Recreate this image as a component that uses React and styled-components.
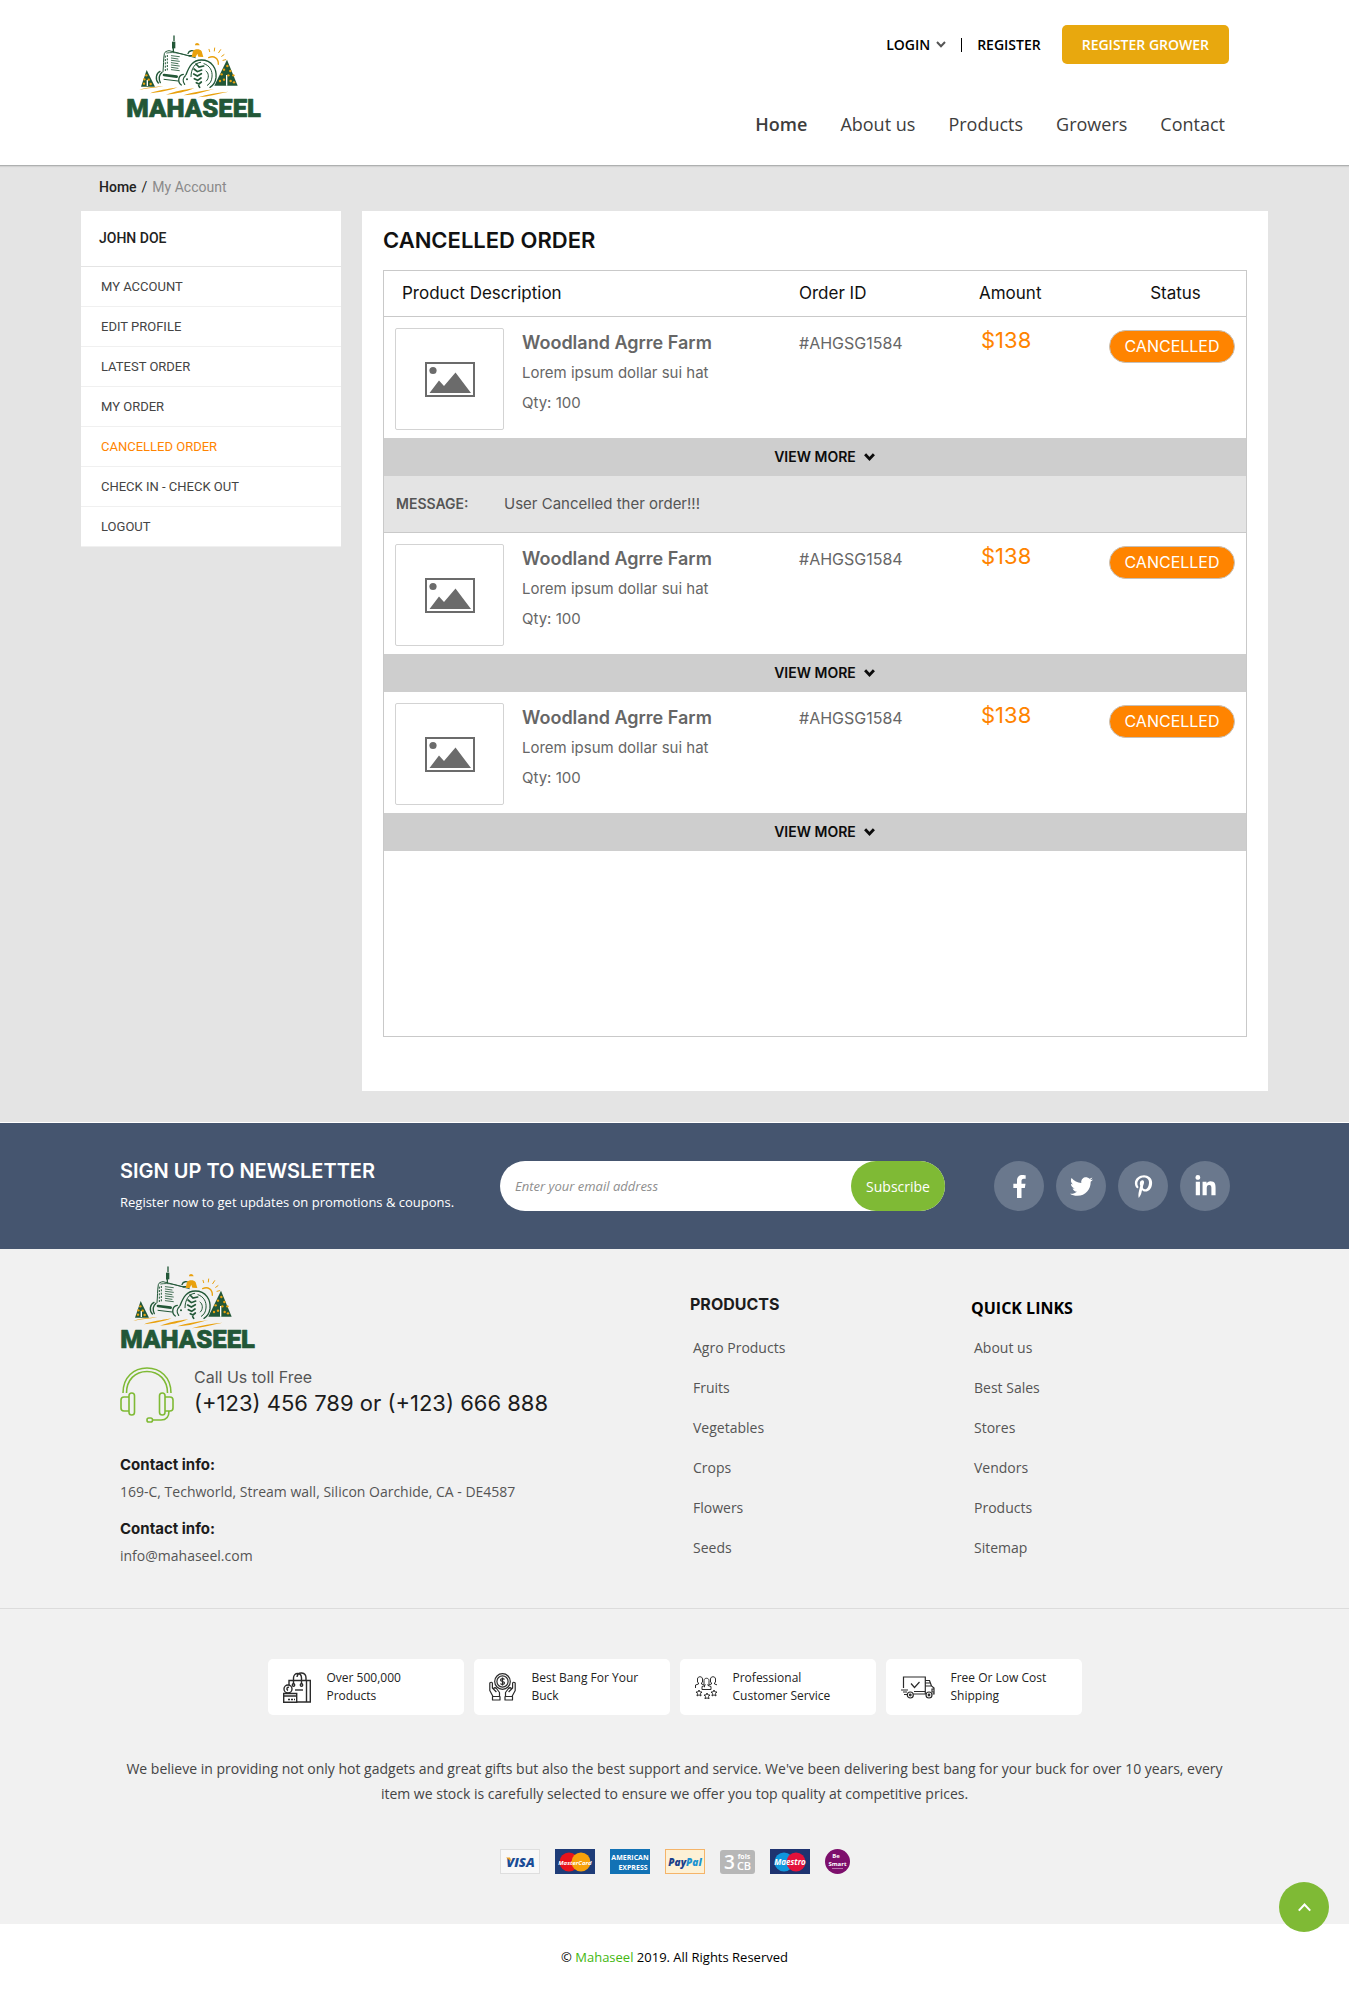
import React from 'react';
import styled, { createGlobalStyle, css } from 'styled-components';
import { FaFacebookF, FaTwitter, FaPinterestP, FaLinkedinIn } from 'react-icons/fa';

const inter = "'Inter', 'Liberation Sans', sans-serif";
const open = "'Open Sans', 'Liberation Sans', sans-serif";
const roboto = "'Roboto', 'Liberation Sans', sans-serif";
const line = '#c9c9c9';
const green = '#7fba35';
const orange = '#ff8400';

const GlobalStyle = createGlobalStyle`
  *, *::before, *::after { box-sizing: border-box; }
  body { margin: 0; background: #fff; font-family: ${open}; color: #111; }
  h1, h2, h3, p, ul { margin: 0; padding: 0; }
  ul { list-style: none; }
  a { color: inherit; text-decoration: none; }
  button { border: 0; padding: 0; background: none; color: inherit; font: inherit; cursor: pointer; }
  svg { display: block; flex: none; }
`;

/* Header */
const Header = styled.header`
  display: flex;
  justify-content: space-between;
  align-items: flex-start;
  padding: 25px 120px 26px 126px;
  background: #fff;
  border-bottom: 1px solid #aeb0b0;
  box-shadow: 0 1px 1px #d2d2d2;
  position: relative;
`;
const HeaderLogo = styled.a`
  margin-top: 10px;
`;
const HeaderSide = styled.div`
  display: flex;
  flex-direction: column;
  align-items: flex-end;
  gap: 45px;
`;
const AccountBar = styled.div`
  display: flex;
  align-items: center;
  gap: 15px;
  font-size: 14px;
  font-weight: 600;
  color: #000;
`;
const LoginButton = styled.button`
  display: flex;
  align-items: center;
  gap: 6px;
`;
const Divider = styled.span`
  width: 1px;
  height: 14px;
  background: #000;
`;
const GrowerButton = styled.button`
  height: 39px;
  margin-left: 6px;
  padding: 0 20px;
  border-radius: 5px;
  background: #e8a80e;
  color: #fff;
`;
const Nav = styled.nav`
  display: flex;
  gap: 33px;
  padding-right: 4px;
`;
const NavLink = styled.a`
  font-size: 18px;
  line-height: 30px;
  color: #3d3d3d;
  font-weight: ${(p) => (p.$active ? 600 : 400)};
`;

/* Account area */
const Page = styled.main`
  padding: 0 81px 31px;
  background: #e4e4e4;
`;
const Breadcrumb = styled.nav`
  display: flex;
  gap: 5px;
  padding: 10px 18px 13px;
  font: 400 14px/22px ${roboto};
  color: #222;
`;
const Crumb = styled.a`
  font-weight: ${(p) => (p.$current ? 400 : 500)};
  color: ${(p) => (p.$current ? '#8a8a8a' : '#222')};
`;
const Columns = styled.div`
  display: flex;
  align-items: flex-start;
  gap: 21px;
`;
const Sidebar = styled.aside`
  flex: none;
  width: 260px;
  background: #fff;
  font-family: ${roboto};
`;
const UserName = styled.h2`
  padding: 0 18px;
  font-size: 14px;
  font-weight: 500;
  line-height: 55px;
  color: #222;
  border-bottom: 1px solid #e4e4e4;
`;
const MenuItem = styled.li`
  border-bottom: 1px solid #f0f0f0;
`;
const MenuLink = styled.a`
  display: block;
  padding: 0 20px;
  font-size: 13px;
  line-height: 39px;
  color: ${(p) => (p.$active ? orange : '#444')};
`;
const Panel = styled.section`
  flex: 1;
  min-width: 0;
  padding: 15px 21px 54px;
  background: #fff;
`;
const PanelTitle = styled.h1`
  margin-bottom: 16px;
  font: 600 22px/28px ${inter};
  color: #111;
`;
const TableFrame = styled.div`
  min-height: 767px;
  border: 1px solid ${line};
`;
const Table = styled.table`
  width: 100%;
  table-layout: fixed;
  border-collapse: separate;
  border-spacing: 0;
  font-family: ${inter};
  td, th { padding: 0; text-align: left; vertical-align: top; }
`;
const Col = styled.col`
  width: ${(p) => p.$width};
`;
const HeadCell = styled.th`
  && {
    padding-left: ${(p) => (p.$first ? '18px' : p.$center ? '6px' : 0)};
    text-align: ${(p) => (p.$center ? 'center' : 'left')};
  }
  border-bottom: 1px solid ${line};
  font-size: 17px;
  font-weight: 400;
  line-height: 45px;
  color: #111;
`;
const Cell = styled.td`
  && { padding-top: 11px; }
  font-size: 16px;
  line-height: 30px;
  color: #666;
`;
const Product = styled.div`
  display: flex;
  gap: 18px;
  padding: 0 0 8px 11px;
`;
const Thumb = styled.div`
  display: flex;
  align-items: center;
  justify-content: center;
  width: 109px;
  height: 102px;
  border: 1px solid #d3d3d3;
  border-radius: 2px;
`;
const ProductName = styled.h3`
  font-size: 18px;
  font-weight: 600;
  line-height: 30px;
  color: #666;
`;
const ProductText = styled.p`
  font-size: 15px;
  line-height: 30px;
  color: #666;
`;
const Amount = styled.span`
  display: block;
  padding-left: 2px;
  font-size: 22px;
  line-height: 24px;
  color: ${orange};
`;
const Badge = styled.span`
  display: block;
  width: 126px;
  margin: 2px 11px 0 auto;
  border: 1px solid #c5c0ba;
  border-radius: 17px;
  background: ${orange};
  font-size: 16px;
  line-height: 31px;
  text-align: center;
  color: #fff;
`;
const ViewMore = styled.button`
  display: grid;
  grid-template-columns: 1fr auto 1fr;
  align-items: center;
  column-gap: 8px;
  width: 100%;
  height: 38px;
  background: #cecece;
  font: 600 14px/20px ${inter};
  color: #0c0c0c;
  svg { grid-column: 3; }
  span { grid-column: 2; }
`;
const Message = styled.div`
  display: flex;
  padding-left: 12px;
  border-bottom: 1px solid ${line};
  background: #e4e4e4;
  font-size: 15px;
  line-height: 56px;
  color: #555;
`;
const MessageLabel = styled.strong`
  width: 108px;
  font-size: 14px;
  font-weight: 600;
`;

/* Newsletter */
const Newsletter = styled.section`
  display: grid;
  grid-template-columns: 380px minmax(0, 1fr) 285px;
  align-items: center;
  padding: 34px 119px 34px 120px;
  border-top: 1px solid #fff;
  background: #45556f;
  color: #fff;
`;
const NewsTitle = styled.h2`
  margin-bottom: 4px;
  font: 600 20px/28px ${inter};
`;
const NewsText = styled.p`
  font-size: 13px;
  line-height: 26px;
`;
const Subscribe = styled.form`
  display: flex;
  height: 50px;
  border-radius: 25px;
  background: #fff;
`;
const EmailInput = styled.input`
  flex: 1;
  min-width: 0;
  padding: 0 15px;
  border: 0;
  outline: 0;
  background: none;
  font: 13px ${open};
  &::placeholder { color: #8e8e8e; font-style: italic; opacity: 1; }
`;
const SubscribeButton = styled.button`
  width: 94px;
  border-radius: 25px;
  background: ${green};
  font-size: 14px;
  color: #fff;
`;
const Socials = styled.div`
  display: flex;
  justify-content: flex-end;
  gap: 12px;
`;
const Social = styled.a`
  display: flex;
  align-items: center;
  justify-content: center;
  width: 50px;
  height: 50px;
  border-radius: 50%;
  background: #6a788d;
  font-size: 23px;
`;

/* Footer */
const Footer = styled.footer`
  background: #f1f1f1;
`;
const FooterTop = styled.div`
  display: grid;
  grid-template-columns: 570px 281px 1fr;
  padding: 17px 120px 37px;
  border-bottom: 1px solid #dcdcdc;
`;
const CallRow = styled.div`
  display: flex;
  gap: 20px;
  margin: 9px 0 30px;
  font-family: ${inter};
`;
const CallLabel = styled.p`
  font-size: 16px;
  line-height: 20px;
  color: #555;
`;
const CallNumber = styled.p`
  font-size: 22px;
  line-height: 32px;
  color: #1c1c1c;
`;
const InfoTitle = styled.h3`
  font: 700 15px/24px ${inter};
  color: #1c1c1c;
`;
const InfoText = styled.p`
  margin-bottom: 10px;
  font-size: 14px;
  line-height: 30px;
  color: #555;
  &:last-child { margin-bottom: 0; }
`;
const LinkColumn = styled.nav`
  padding-top: 26px;
`;
const LinkTitle = styled.h3`
  height: 36px;
  ${(p) =>
    p.$alt
      ? css`font: 700 16px/32px ${open}; color: #000;`
      : css`font: 700 16px/24px ${inter}; color: #1c1c1c;`}
`;
const FooterLink = styled.a`
  display: block;
  padding-left: 3px;
  font-size: 14px;
  line-height: 40px;
  color: #555;
`;
const FooterBottom = styled.div`
  display: flex;
  flex-direction: column;
  align-items: center;
  padding: 50px 120px;
`;
const Features = styled.ul`
  display: flex;
  flex-wrap: wrap;
  justify-content: center;
  gap: 10px;
`;
const Feature = styled.li`
  display: flex;
  align-items: center;
  gap: 16px;
  width: 196px;
  height: 56px;
  padding-left: 15px;
  border-radius: 5px;
  background: #fff;
  font-size: 12px;
  font-weight: 500;
  line-height: 18px;
  color: #222;
`;
const Pitch = styled.p`
  margin: 41px 0 43px;
  font-size: 14px;
  line-height: 25px;
  text-align: center;
  color: #444;
`;
const Cards = styled.div`
  display: flex;
  gap: 15px;
`;
const Copyright = styled.div`
  padding: 21px 0 31px;
  background: #fff;
  font-size: 13px;
  line-height: 24px;
  text-align: center;
  color: #000;
`;
const Brand = styled.a`
  color: #43b70f;
`;
const ToTop = styled.button`
  position: fixed;
  right: 20px;
  bottom: 68px;
  display: flex;
  align-items: center;
  justify-content: center;
  width: 50px;
  height: 50px;
  border-radius: 50%;
  background: ${green};
  color: #fff;
`;

const Chevron = ({ w = 10, h = 7, sw = 2, up = false, color = 'currentColor' }) => (
  <svg width={w} height={h} viewBox="0 0 10 7" fill="none" stroke={color} strokeWidth={sw} aria-hidden="true">
    <path d={up ? 'M1 6l4-4.2L9 6' : 'M1 1l4 4.2L9 1'} />
  </svg>
);

const treeDots = (pts) => pts.map(([x, y]) => <circle key={`${x}-${y}`} cx={x} cy={y} r="3.6" fill="#e9a10e" />);

const Logo = () => (
  <svg width="138" height="92" viewBox="18 30 414 276" role="img" aria-label="Mahaseel">
    <g fill="none" stroke="#225737" strokeWidth="3" strokeLinecap="round">
      <path d="M162 33v14" strokeWidth="4" />
      <path d="M161 50v20" strokeWidth="10" strokeLinecap="butt" />
      <path d="M160 70v10" strokeWidth="4" />
      <path d="M129 140c2-20 1-36 4-54 1-6 8-8 14-9l62 16" />
      <path d="M140 84c14-2 22-2 36 1 20 4 33 9 50 13" strokeWidth="2.5" />
      <path d="M136 92v46M142 90v48" strokeWidth="3" strokeDasharray="6 4" strokeLinecap="butt" />
      <path d="M154 92l24 3M154 99l20 3M154 106l24 3M154 113l20 3M154 120l24 3M154 127l20 3M154 134l24 3" strokeWidth="2.5" />
      <path d="M132 150l38 5" strokeWidth="8" />
      <path d="M132 163l42 5" />
      <path d="M120 139c-12 6-15 24-5 35M126 142c-9 8-10 20-5 31" strokeWidth="4" />
      <path d="M190 148c-16 2-18 24-6 32M196 152c-8 7-8 18-2 26" strokeWidth="4" />
      <path d="M198 149c10-26 20-44 46-44 32 0 47 27 44 53-2 14-9 24-18 29" strokeWidth="4" />
      <path d="M213 155c0-24 12-42 29-43M252 116c18 6 26 22 24 40-1 12-6 20-14 25" strokeWidth="3" />
      <path d="M228 117l9 9 14-3M222 132l10 8 13-5M221 147l11 6 12-7M223 161l10 5 10-7M229 173l8 4 7-6M236 182l3 5" strokeWidth="5" />
      <path d="M258 138c9 6 10 22 1 30" />
      <path d="M204 86c3-10 16-12 20-4M208 92h16" strokeWidth="4" />
    </g>
    <circle cx="201" cy="163" r="3" fill="#225737" />
    <path d="M225 61c0-9 11-10 14 0zM219 78c5-6 20-8 26 1l5 17-15-1-3-9-5 10h-12z" fill="#e9a10e" />
    <g fill="none" stroke="#e9a10e" strokeWidth="4" strokeLinecap="round">
      <path d="M266 98c16-8 30 3 29 20" />
      <path d="M269 80l-2-7M283 78l1-9M296 83l6-9M305 94l7-5M309 106l8-2" strokeWidth="3" />
    </g>
    <path d="M321 104l-38 78h70z" fill="#225737" />
    <path d="M80 135l-17 50h42z" fill="#225737" />
    <path d="M320 150v32M82 165v18" stroke="#fff" strokeWidth="4" />
    {treeDots([[322, 123], [312, 134], [331, 138], [305, 148], [325, 151], [340, 151], [312, 164], [332, 168], [300, 168], [342, 172], [79, 151], [73, 163], [86, 164], [72, 176], [92, 177]])}
    <g fill="#e9a10e">
      <path d="M58 195c20-9 45-9 72-12-25 6-50 6-72 12zM90 205c25-10 50-12 83-18-26 10-50 15-83 18zM138 209c28-9 50-15 85-19-28 11-50 16-85 19zM190 211c26-9 60-14 92-19-28 8-56 18-92 19zM234 217c28-10 60-14 92-17-28 6-60 14-92 17z" />
    </g>
    <text x="19" y="277" fontFamily="Roboto, sans-serif" fontWeight="900" fontSize="77" fill="#225737" stroke="#225737" strokeWidth="2" strokeLinejoin="round">MAHASEEL</text>
  </svg>
);

const Picture = () => (
  <svg width="50" height="35" viewBox="0 0 50 35" aria-hidden="true">
    <rect x="1" y="1" width="48" height="33" fill="none" stroke="#6b6b6b" strokeWidth="2" />
    <circle cx="8" cy="8.5" r="3.6" fill="#6b6b6b" />
    <path d="M4.500 31L14 18.500l5 5.500L30.500 10.500 46 31z" fill="#6b6b6b" />
  </svg>
);

const Headset = () => (
  <svg width="54" height="56" viewBox="0 0 54 56" fill="none" stroke={green} strokeWidth="1.600" aria-hidden="true">
    <path d="M3 26C3 10 14 1 27 1s24 9 24 25M6.500 26C6.500 13 15 4.500 27 4.500S47.500 13 47.500 26" />
    <rect x="9" y="26" width="5.500" height="22" rx="2.700" />
    <rect x="39.500" y="26" width="5.500" height="22" rx="2.700" />
    <path d="M9 30H4q-3 0-3 3v8q0 3 3 3h5M45 30h5q3 0 3 3v8q0 3-3 3h-5M49 44c0 6-3 9-8 9h-9" />
    <rect x="27" y="51" width="5.500" height="4" rx="1.800" />
  </svg>
);

const BagIcon = () => (
  <svg width="28" height="31" viewBox="0 0 28 31" fill="none" stroke="#2b2b2b" strokeWidth="1.400" aria-hidden="true">
    <path d="M6 13V8.500h21.300V30H14M23.500 9v21M10.500 12V6c0-6 8-6 8 0v6M14 5c1-6 9-5 9 1v2" />
    <circle cx="10.500" cy="13" r="1.200" /><circle cx="18.500" cy="13" r="1.200" />
    <path d="M12 18h8" />
    <circle cx="5" cy="17" r="4" /><path d="M6 15.500c-2-1-3 2-1 3" />
    <path d="M.7 21.500h13v8.800H.7zM1 24h12.500" /><path d="M5 27.500h7" strokeDasharray="2 1" />
  </svg>
);
const HandsIcon = () => (
  <svg width="27" height="28" viewBox="0 0 27 28" fill="none" stroke="#2b2b2b" strokeWidth="1.200" strokeLinejoin="round" aria-hidden="true">
    <circle cx="13.500" cy="8.500" r="7.800" /><circle cx="13.500" cy="8.500" r="5.600" />
    <path d="M15.500 6.500c-1-1.500-4-1-4 .5 0 2 4 1 4 3 0 1.600-3 2-4 .5M13.500 4.500v8" />
    <path d="M4 23.500L.8 17.500V10q1.700-1.500 2.600 0v5l4 4M4.500 15.500q1.500-1.500 3 0l3 4v4M3.500 23.500h7.500V27H3.500z" />
    <path d="M23 23.500l3.200-6V10q-1.700-1.500-2.600 0v5l-4 4M22.500 15.500q-1.500-1.500-3 0l-3 4v4M23.500 23.500H16V27h7.500z" />
  </svg>
);
const person = 'M-2.500 5.500v-3.500c0-3 5-3 5 0v3.500M-1.500 5.500v1.500l-3 1V11M1.500 5.500v1.500l3 1V11';
const star = 'M0-3L1-1H3L1.500.6 2 3 0 1.800-2 3-1.500.6-3-1H-1z';
const TeamIcon = () => (
  <svg width="22" height="23" viewBox="0 0 22 23" fill="none" stroke="#2b2b2b" strokeWidth="1" aria-hidden="true">
    <path d={person} transform="translate(5 1)" /><path d={person} transform="translate(18 1)" />
    <path d={`${person}H-4.500`} transform="translate(11.500 2.500)" fill="#fff" />
    <path d={star} transform="translate(4 17)" /><path d={star} transform="translate(12 20)" /><path d={star} transform="translate(19 17)" />
  </svg>
);
const TruckIcon = () => (
  <svg width="34" height="23" viewBox="0 0 34 23" fill="none" stroke="#2b2b2b" strokeWidth="1.200" aria-hidden="true">
    <path d="M2.500 12V1h21.800v17H12.500M24.300 4.500h4.200l2 5.500 2.500 2v6h-1.500M24.300 7h5M24.500 10h6M33 13h-2v3h2M10 7.500l3.500 4 5-5.500M0 14h7M2 16h4M3 18.500h3M24.300 15.500H13" />
    <circle cx="9.300" cy="19" r="3" /><circle cx="9.300" cy="19" r=".8" />
    <circle cx="28" cy="19" r="3" /><circle cx="28" cy="19" r=".8" />
  </svg>
);

const cardText = { textAnchor: 'middle', fontFamily: 'Open Sans, sans-serif', fontWeight: 700, fill: '#fff' };
const Card = ({ name, width, children }) => (
  <svg width={width} height="25" viewBox={`0 0 ${width} 25`} role="img" aria-label={name}>{children}</svg>
);
const PaymentCards = () => (
  <Cards>
    <Card name="Visa" width={40}>
      <rect x=".5" y=".5" width="39" height="24" fill="#f8f8f8" stroke="#dedede" />
      <text {...cardText} x="20.500" y="18" fontSize="13" fontStyle="italic" fontWeight="800" fill="#1a4c96">VISA</text>
      <path d="M6 8.500h4l1.500 4z" fill="#eda221" />
    </Card>
    <Card name="MasterCard" width={40}>
      <rect width="40" height="25" fill="#1e3c78" />
      <circle cx="14" cy="13" r="9.500" fill="#e8131b" /><circle cx="26" cy="13" r="9.500" fill="#f7a10b" />
      <text {...cardText} x="20" y="15.500" fontSize="6" fontStyle="italic">MasterCard</text>
    </Card>
    <Card name="American Express" width={40}>
      <rect width="40" height="25" fill="#1272b5" />
      <text {...cardText} x="20" y="11" fontSize="7">AMERICAN</text>
      <text {...cardText} x="23" y="21" fontSize="7">EXPRESS</text>
    </Card>
    <Card name="PayPal" width={40}>
      <rect x=".5" y=".5" width="39" height="24" fill="#fdf1d6" stroke="#f5b469" />
      <text {...cardText} x="20" y="16.500" fontSize="10" fontStyle="italic" fontWeight="800" fill="#1b3f8b">Pay<tspan fill="#1c93d1">Pal</tspan></text>
    </Card>
    <Card name="3 fois CB" width={35}>
      <rect y="1" width="35" height="24" rx="3" fill="#b7b7b7" />
      <text {...cardText} x="9.500" y="19.500" fontSize="19" fontWeight="600">3</text>
      <text {...cardText} x="24" y="9.500" fontSize="7">fois</text>
      <text {...cardText} x="24" y="21" fontSize="11" fontWeight="600">CB</text>
    </Card>
    <Card name="Maestro" width={40}>
      <rect width="40" height="25" fill="#1e3370" />
      <circle cx="14" cy="13" r="9.500" fill="#0f97dd" /><circle cx="26" cy="13" r="9.500" fill="#e3123a" />
      <text {...cardText} x="20" y="16" fontSize="8" fontStyle="italic">Maestro</text>
    </Card>
    <Card name="Be Smart" width={25}>
      <circle cx="12.500" cy="12.500" r="12.500" fill="#7d0f6c" />
      <text {...cardText} x="11" y="9" fontSize="6">Be</text>
      <text {...cardText} x="12.500" y="17" fontSize="6">Smart</text>
      <path d="M7 19.500h11" stroke="#b975ae" />
    </Card>
  </Cards>
);

const navItems = ['Home', 'About us', 'Products', 'Growers', 'Contact'];
const menuItems = ['MY ACCOUNT', 'EDIT PROFILE', 'LATEST ORDER', 'MY ORDER', 'CANCELLED ORDER', 'CHECK IN - CHECK OUT', 'LOGOUT'];
const orders = [
  { key: 1, message: 'User Cancelled ther order!!!' },
  { key: 2 },
  { key: 3 },
];
const productLinks = ['Agro Products', 'Fruits', 'Vegetables', 'Crops', 'Flowers', 'Seeds'];
const quickLinks = ['About us', 'Best Sales', 'Stores', 'Vendors', 'Products', 'Sitemap'];
const features = [
  [BagIcon, 'Over 500,000', 'Products'],
  [HandsIcon, 'Best Bang For Your', 'Buck'],
  [TeamIcon, 'Professional', 'Customer Service'],
  [TruckIcon, 'Free Or Low Cost', 'Shipping'],
];
const socials = [['Facebook', FaFacebookF], ['Twitter', FaTwitter], ['Pinterest', FaPinterestP], ['LinkedIn', FaLinkedinIn]];

const OrderRows = ({ message }) => (
  <>
    <tr>
      <Cell>
        <Product>
          <Thumb><Picture /></Thumb>
          <div>
            <ProductName>Woodland Agrre Farm</ProductName>
            <ProductText>Lorem ipsum dollar sui hat</ProductText>
            <ProductText>Qty: 100</ProductText>
          </div>
        </Product>
      </Cell>
      <Cell>#AHGSG1584</Cell>
      <Cell><Amount>$138</Amount></Cell>
      <Cell><Badge>CANCELLED</Badge></Cell>
    </tr>
    <tr>
      <td colSpan={4}>
        <ViewMore type="button"><span>VIEW MORE</span><Chevron w={11} h={8} sw={2.6} /></ViewMore>
      </td>
    </tr>
    {message && (
      <tr>
        <td colSpan={4}>
          <Message><MessageLabel>MESSAGE:</MessageLabel>{message}</Message>
        </td>
      </tr>
    )}
  </>
);

export default function App() {
  return (
    <>
      <GlobalStyle />
      <Header>
        <HeaderLogo href="#"><Logo /></HeaderLogo>
        <HeaderSide>
          <AccountBar>
            <LoginButton type="button">LOGIN <Chevron color="#555" /></LoginButton>
            <Divider />
            <a href="#">REGISTER</a>
            <GrowerButton type="button">REGISTER GROWER</GrowerButton>
          </AccountBar>
          <Nav>
            {navItems.map((t, i) => <NavLink key={t} href="#" $active={i === 0}>{t}</NavLink>)}
          </Nav>
        </HeaderSide>
      </Header>

      <Page>
        <Breadcrumb><Crumb href="#">Home</Crumb><span>/</span><Crumb href="#" $current>My Account</Crumb></Breadcrumb>
        <Columns>
          <Sidebar>
            <UserName>JOHN DOE</UserName>
            <ul>
              {menuItems.map((t) => (
                <MenuItem key={t}><MenuLink href="#" $active={t === 'CANCELLED ORDER'}>{t}</MenuLink></MenuItem>
              ))}
            </ul>
          </Sidebar>
          <Panel>
            <PanelTitle>CANCELLED ORDER</PanelTitle>
            <TableFrame>
              <Table>
                <colgroup><Col /><Col $width="180px" /><Col $width="120px" /><Col $width="147px" /></colgroup>
                <thead>
                  <tr>
                    <HeadCell $first>Product Description</HeadCell>
                    <HeadCell>Order ID</HeadCell>
                    <HeadCell>Amount</HeadCell>
                    <HeadCell $center>Status</HeadCell>
                  </tr>
                </thead>
                <tbody>
                  {orders.map((o) => <OrderRows key={o.key} message={o.message} />)}
                </tbody>
              </Table>
            </TableFrame>
          </Panel>
        </Columns>
      </Page>

      <Newsletter>
        <div>
          <NewsTitle>SIGN UP TO NEWSLETTER</NewsTitle>
          <NewsText>Register now to get updates on promotions &amp; coupons.</NewsText>
        </div>
        <Subscribe onSubmit={(e) => e.preventDefault()}>
          <EmailInput type="email" aria-label="Email address" placeholder="Enter your email address" />
          <SubscribeButton type="submit">Subscribe</SubscribeButton>
        </Subscribe>
        <Socials>
          {socials.map(([name, Icon]) => <Social key={name} href="#" aria-label={name}><Icon /></Social>)}
        </Socials>
      </Newsletter>

      <Footer>
        <FooterTop>
          <div>
            <Logo />
            <CallRow>
              <Headset />
              <div>
                <CallLabel>Call Us toll Free</CallLabel>
                <CallNumber>(+123) 456 789 or (+123) 666 888</CallNumber>
              </div>
            </CallRow>
            <InfoTitle>Contact info:</InfoTitle>
            <InfoText>169-C, Techworld, Stream wall, Silicon Oarchide, CA - DE4587</InfoText>
            <InfoTitle>Contact info:</InfoTitle>
            <InfoText><a href="mailto:info@mahaseel.com">info@mahaseel.com</a></InfoText>
          </div>
          <LinkColumn>
            <LinkTitle>PRODUCTS</LinkTitle>
            <ul>{productLinks.map((t) => <li key={t}><FooterLink href="#">{t}</FooterLink></li>)}</ul>
          </LinkColumn>
          <LinkColumn>
            <LinkTitle $alt>QUICK LINKS</LinkTitle>
            <ul>{quickLinks.map((t) => <li key={t}><FooterLink href="#">{t}</FooterLink></li>)}</ul>
          </LinkColumn>
        </FooterTop>
        <FooterBottom>
          <Features>
            {features.map(([Icon, a, b]) => (
              <Feature key={a}><Icon /><span>{a}<br />{b}</span></Feature>
            ))}
          </Features>
          <Pitch>
            We believe in providing not only hot gadgets and great gifts but also the best support and service. We've been
            delivering best bang for your buck for over 10 years, every item we stock is carefully selected to ensure we offer
            you top quality at competitive prices.
          </Pitch>
          <PaymentCards />
        </FooterBottom>
        <Copyright>© <Brand href="#">Mahaseel</Brand> 2019. All Rights Reserved</Copyright>
      </Footer>
      <ToTop type="button" aria-label="Back to top"><Chevron w={15} h={10} sw={1.4} up /></ToTop>
    </>
  );
}
